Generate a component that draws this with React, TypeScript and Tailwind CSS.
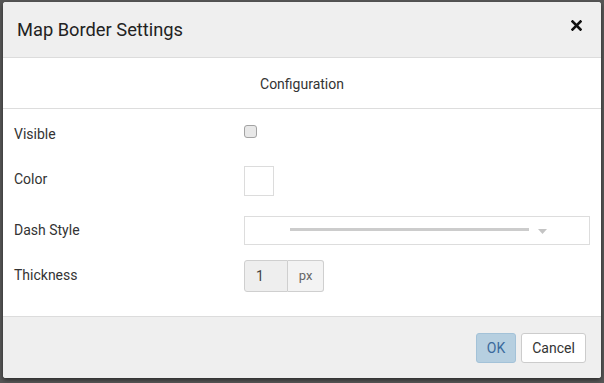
export default function App() {
  const font = { fontFamily: "Roboto, 'Liberation Sans', sans-serif" };

  return (
    <div
      className="w-[604px] h-[383px] bg-[#575757] pt-[2px] pl-[3px] overflow-hidden"
      style={font}
    >
      <div className="w-[598px] h-[376px] rounded-[3px] overflow-hidden bg-white flex flex-col shadow-[0_2px_4px_rgba(0,0,0,0.5)]">
        {/* Header */}
        <div className="h-[56px] bg-[#efefef] border-b border-[#dcdcdc] flex items-center justify-between pl-[14px] pr-[19px]">
          <h2 className="text-[18.3px] text-[#222]">Map Border Settings</h2>
          <svg width="11" height="11" viewBox="0 0 11 11" className="mt-[-8px]">
            <path d="M1.5 1.5 L9.5 9.5 M9.5 1.5 L1.5 9.5" stroke="#111" strokeWidth="2.6" strokeLinecap="square" />
          </svg>
        </div>

        {/* Body */}
        <div className="flex-1 flex flex-col">
          <div className="h-[51px] border-b border-[#ddd] flex items-center justify-center text-[14px] text-[#333] pt-[2px]">
            Configuration
          </div>

          <div className="flex flex-col pl-[11px] pr-[11px] pt-[2px] text-[14px] text-[#333]">
            <div className="h-[46px] flex items-center">
              <div className="w-[230px]">Visible</div>
              <div className="w-[13px] h-[13px] rounded-[3px] border border-[#a3a3a3] bg-[#e8e8e8] mt-[-5px]" />
            </div>

            <div className="h-[48px] flex items-center">
              <div className="w-[230px] mt-[-3px]">Color</div>
              <div className="w-[30px] h-[30px] border border-[#dcdcdc] bg-white" />
            </div>

            <div className="h-[51px] flex items-center">
              <div className="w-[230px]">Dash Style</div>
              <div className="flex-1 h-[29px] border border-[#ddd] flex items-center pl-[45px] pr-[41px]">
                <div className="w-[239px] h-[3px] bg-[#cccccc] mt-[-3px]" />
                <svg width="9" height="5" viewBox="0 0 9 5" className="ml-[9px] mt-[2px]">
                  <path d="M0 0 L9 0 L4.5 5 Z" fill="#c4c4c4" />
                </svg>
              </div>
            </div>

            <div className="h-[40px] flex items-center">
              <div className="w-[230px] mt-[-1px]">Thickness</div>
              <div className="flex h-[32px]">
                <div className="w-[44px] bg-[#eeeeee] border border-[#cfcfcf] rounded-l-[3px] flex items-center pl-[11px] text-[14px] text-[#444]">
                  1
                </div>
                <div className="w-[36px] border border-l-0 border-[#cfcfcf] rounded-r-[3px] bg-[#f3f3f3] flex items-center justify-center text-[13px] text-[#666]">
                  px
                </div>
              </div>
            </div>
          </div>
        </div>

        {/* Footer */}
        <div className="h-[62px] bg-[#efefef] border-t border-[#dcdcdc] flex items-center justify-end gap-[5px] pr-[15px] pt-[1px]">
          <button className="w-[40px] h-[30px] rounded-[3px] bg-[#b6cfe0] border border-[#a3c2d8] text-[14px] text-[#3b6a9c]">
            OK
          </button>
          <button className="w-[65px] h-[30px] rounded-[3px] bg-white border border-[#cccccc] text-[14px] text-[#333]">
            Cancel
          </button>
        </div>
      </div>
    </div>
  );
}
